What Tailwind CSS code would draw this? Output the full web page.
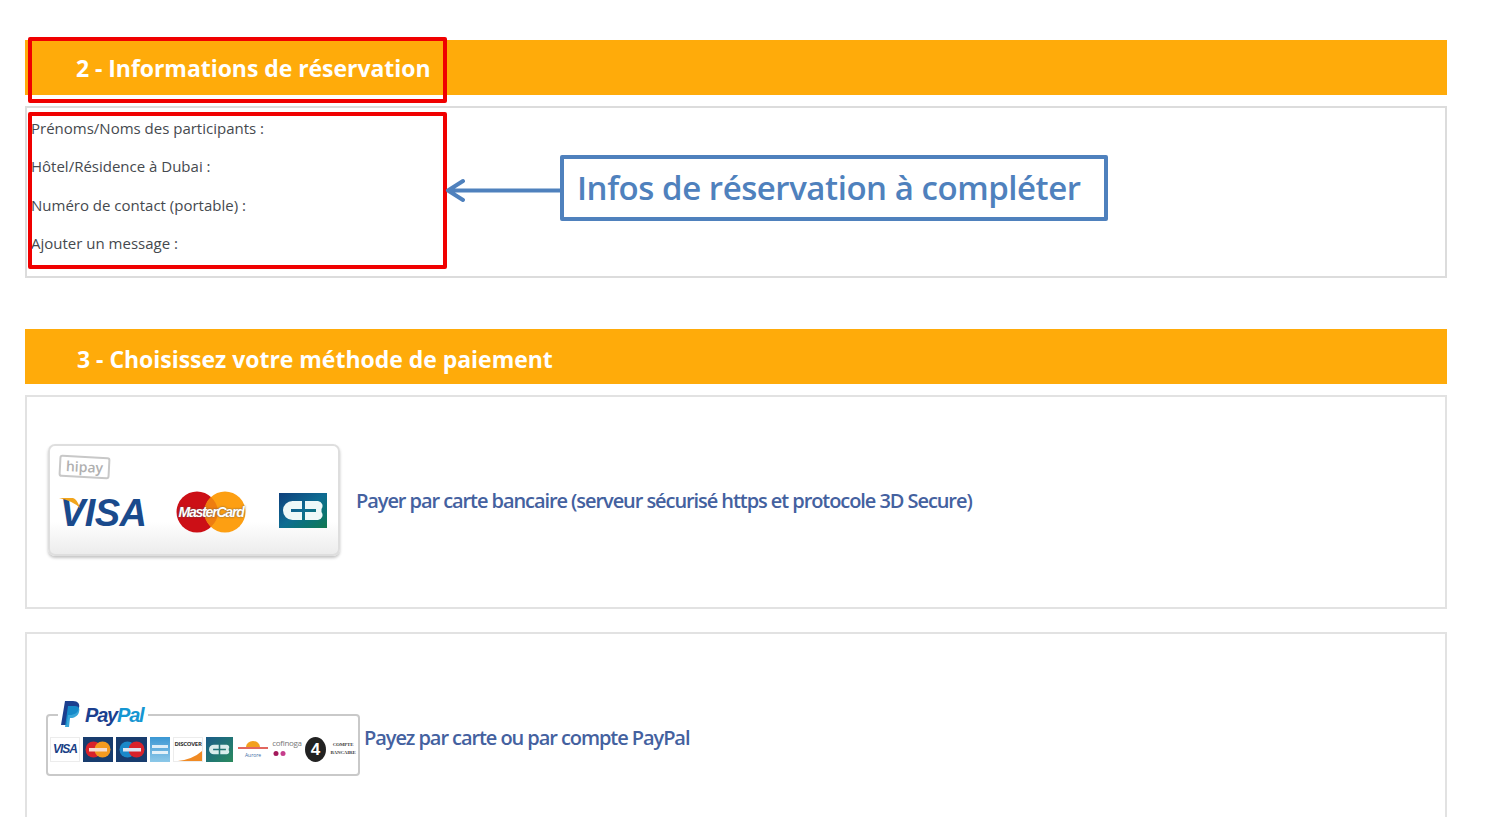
<!DOCTYPE html>
<html lang="fr">
<head>
    <meta charset="UTF-8">
    <title>Réservation</title>
    <script src="https://cdn.jsdelivr.net/npm/@tailwindcss/browser@4"></script>
</head>
<body class="bg-white font-['Open_Sans',sans-serif] h-[817px] overflow-hidden relative">
    <div class="w-[1422px] ml-[25px] pt-[40px]">
        <!-- section 2 -->
        <div class="h-[55px] bg-[#ffab0a] pl-[51px] pt-[2px] flex items-center text-white font-bold text-[23px] tracking-[-0.05px]">2 - Informations de réservation</div>
        <div class="mt-[11px] h-[172px] border-2 border-[#dcdcdc] pl-[4px] pt-[10px] text-[15px] text-[#45494e] leading-[20px] flex flex-col gap-[18.3px]">
            <p>Prénoms/Noms des participants :</p>
            <p>Hôtel/Résidence à Dubai :</p>
            <p>Numéro de contact (portable) :</p>
            <p>Ajouter un message :</p>
        </div>

        <!-- section 3 -->
        <div class="mt-[51px] h-[55px] bg-[#ffab0a] pl-[52px] pt-[5px] flex items-center text-white font-bold text-[23px] tracking-[-0.03px]">3 - Choisissez votre méthode de paiement</div>

        <div class="mt-[11px] h-[214px] border-2 border-[#e2e2e2] pl-[21px] pt-[47px] flex items-start">
            <!-- hipay card -->
            <div class="w-[292px] h-[112px] shrink-0 rounded-[7px] border-2 border-[#dedede] bg-gradient-to-b from-white from-70% to-[#ececec] shadow-[0_2px_3px_#c4c4c4] relative">
                <div class="absolute left-[9px] top-[10px] w-[51px] h-[22px] border-2 border-[#c8c8c8] rounded-[3px] rotate-[3deg] bg-white flex items-center justify-center text-[14px] font-semibold text-[#b0b0b0] leading-none">hipay</div>
                <div class="absolute left-[10px] top-[47px] text-[#1a4a8c] italic font-bold text-[38px] leading-[40px] font-['Liberation_Sans',sans-serif] tracking-[-0.6px]">VISA</div>
                <svg class="absolute left-[9px] top-[52px]" width="28" height="12" viewBox="0 0 28 12"><path d="M0 0 H14 Q18 1 21 10 Q14 3 0 0Z" fill="#f2a51c"/></svg>
                <svg class="absolute left-[126px] top-[45px]" width="70" height="42" viewBox="0 0 70 42"><circle cx="21" cy="21" r="20.5" fill="#cc0f16"/><circle cx="49" cy="21" r="20.5" fill="#fd9f12"/><path d="M35 6 Q42 13 42 21 Q42 29 35 36 Q28 29 28 21 Q28 13 35 6Z" fill="#ee7d10"/></svg>
                <div class="absolute left-[127px] top-[56px] w-[68px] text-center text-white font-bold italic text-[14px] leading-[20px] tracking-[-1.2px] font-['Liberation_Sans',sans-serif] [text-shadow:0_0_2px_#555]">MasterCard</div>
                <!-- CB -->
                <div class="absolute left-[229px] top-[47px] w-[48px] h-[35px] bg-gradient-to-br from-[#0f3f7c] via-[#0f6c92] to-[#13794f] flex items-center justify-center">
                    <svg width="41" height="19" viewBox="0 0 41 19"><path d="M19 0 H9.5 a9.5 9.5 0 0 0 0 19 H19 V11 H8 V8 H19Z M22 0 H35 a5 5 0 0 1 3.500 8 V11 a5 5 0 0 1 -3.500 8 H22 V11 H33 V8 H22Z" fill="#eef8f8"/></svg>
                </div>
            </div>
            <a class="ml-[16px] mt-[44px] text-[#44619f] text-[20px] font-semibold tracking-[-1.07px] leading-[26px]">Payer par carte bancaire (serveur sécurisé https et protocole 3D Secure)</a>
        </div>

        <div class="mt-[23px] h-[214px] border-2 border-[#e2e2e2] pl-[19px] pt-[66px] flex items-start">
            <!-- paypal card -->
            <div class="w-[314px] h-[78px] shrink-0 relative">
                <div class="absolute left-0 right-0 top-[14px] h-[62px] border-2 border-[#c9c9c9] rounded-[4px]"></div>
                <div class="absolute left-[12px] top-0 w-[90px] h-[28px] bg-white"></div>
                <svg class="absolute left-[15px] top-[1px]" width="19" height="26" viewBox="0 0 19 26"><path d="M4 0 H12 C17 0 19 3 18 7 C17 12 13 14 9 14 H7 L5.500 24 H0Z" fill="#1b3f8f"/><path d="M7 5 H14 C18 5 19 8 18 11 C17 15 13 17 10 17 H9 L8 26 H4Z" fill="#1596d2" opacity=".85"/></svg>
                <div class="absolute left-[39px] top-[1px] text-[20px] leading-[28px] italic font-bold tracking-[-1.2px] font-['Liberation_Sans',sans-serif]"><span class="text-[#1b3f8f]">Pay</span><span class="text-[#1596d2]">Pal</span></div>
                <div class="absolute left-[4px] top-[24px] h-[50px] flex items-center gap-[3px] whitespace-nowrap">
                    <div class="w-[30px] h-[25px] bg-white border border-[#ececec] flex items-center justify-center text-[#1a3f86] italic font-bold text-[12px] tracking-[-1px] font-['Liberation_Sans',sans-serif]">VISA</div>
                    <div class="w-[30px] h-[25px] bg-[#183c6e] flex items-center justify-center">
                        <svg width="26" height="17" viewBox="0 0 26 17"><circle cx="8.500" cy="8.500" r="8" fill="#d9222a"/><circle cx="17.500" cy="8.500" r="8" fill="#f59a1f"/><rect x="4" y="7" width="18" height="3.500" fill="#f6dcd0"/></svg>
                    </div>
                    <div class="w-[31px] h-[25px] bg-[#183c6e] flex items-center justify-center">
                        <svg width="26" height="17" viewBox="0 0 26 17"><circle cx="8.500" cy="8.500" r="8" fill="#1a88c9"/><circle cx="17.500" cy="8.500" r="8" fill="#d9222a"/><rect x="4" y="7" width="18" height="3.500" fill="#dfe6f2"/></svg>
                    </div>
                    <div class="w-[20px] h-[25px] bg-gradient-to-b from-[#3a97d3] to-[#8cc8e8] flex flex-col justify-center gap-[3px] px-[2px]"><div class="h-[3px] bg-white/80"></div><div class="h-[3px] bg-white/80"></div></div>
                    <div class="w-[30px] h-[25px] bg-white border border-[#ececec] relative overflow-hidden">
                        <div class="text-[6px] font-bold text-[#333] leading-[12px] text-center tracking-[-0.3px]">DISCOVER</div>
                        <svg class="absolute left-0 bottom-0" width="29" height="11" viewBox="0 0 29 11"><path d="M29 0 V11 H4 Q20 9 29 0Z" fill="#f08a24"/></svg>
                    </div>
                    <div class="w-[27px] h-[25px] bg-gradient-to-br from-[#1d5b88] to-[#2b8a5c] flex items-center justify-center">
                        <svg width="21" height="11" viewBox="0 0 41 19"><path d="M19 0 H9.500 a9.500 9.500 0 0 0 0 19 H19 V11 H8 V8 H19Z M22 0 H35 a5 5 0 0 1 3.500 8 V11 a5 5 0 0 1 -3.500 8 H22 V11 H33 V8 H22Z" fill="#d8ecec"/></svg>
                    </div>
                    <div class="w-[30px] h-[25px] ml-[2px] bg-white relative">
                        <svg class="absolute left-0 top-[3px]" width="30" height="11" viewBox="0 0 30 11"><path d="M8 7 A7 6 0 0 1 22 7Z" fill="#f2a01e"/><path d="M0 8 H30" stroke="#d9352a" stroke-width="1.500"/></svg>
                        <div class="absolute left-0 right-0 top-[14px] text-center text-[5px] leading-[8px] text-[#3d6ea5]">Aurore</div>
                    </div>
                    <div class="w-[30px] h-[25px] bg-white relative ml-[1px]">
                        <div class="text-[8px] text-[#777] leading-[12px] text-center tracking-[-0.3px]">cofinoga</div>
                        <svg class="absolute left-[1px] top-[13px]" width="14" height="7" viewBox="0 0 14 7"><circle cx="3" cy="3.500" r="2.500" fill="#a3195b"/><circle cx="10" cy="3.500" r="2.500" fill="#c63d8c"/></svg>
                    </div>
                    <div class="w-[21px] h-[25px] rounded-[50%] bg-[#222] flex items-center justify-center text-white font-bold text-[17px] leading-none font-['Liberation_Sans',sans-serif]">4</div>
                    <div class="w-[28px] h-[25px] bg-white flex flex-col items-center justify-center text-[5px] leading-[8px] font-bold text-[#444] tracking-[-0.2px] font-['Liberation_Serif',serif]"><span>COMPTE</span><span>BANCAIRE</span></div>
                </div>
            </div>
            <a class="ml-[4px] mt-[25px] text-[#44619f] text-[20px] font-semibold tracking-[-1.07px] leading-[26px]">Payez par carte ou par compte PayPal</a>
        </div>
    </div>

    <!-- annotations posees par dessus la capture -->
    <div class="absolute left-[28px] top-[37px] w-[419px] h-[66px] border-[4px] border-[#f00000] rounded-[2px]"></div>
    <div class="absolute left-[28px] top-[112px] w-[419px] h-[157px] border-[4px] border-[#f00000] rounded-[2px]"></div>
    <svg class="absolute left-[442px] top-[176px]" width="120" height="30" viewBox="0 0 120 30">
        <path d="M118 14.500 H6 M21 5 L6 14.500 L21 24" fill="none" stroke="#4f81bd" stroke-width="4" stroke-linecap="round" stroke-linejoin="round"/>
    </svg>
    <div class="absolute left-[560px] top-[155px] w-[548px] h-[66px] border-[4px] border-[#4f81bd] rounded-[2px] bg-white flex items-center pl-[13px] text-[#4f81bd] font-['Open_Sans',sans-serif] font-semibold text-[33px] tracking-[-0.45px] whitespace-nowrap">Infos de réservation à compléter</div>
</body>
</html>
